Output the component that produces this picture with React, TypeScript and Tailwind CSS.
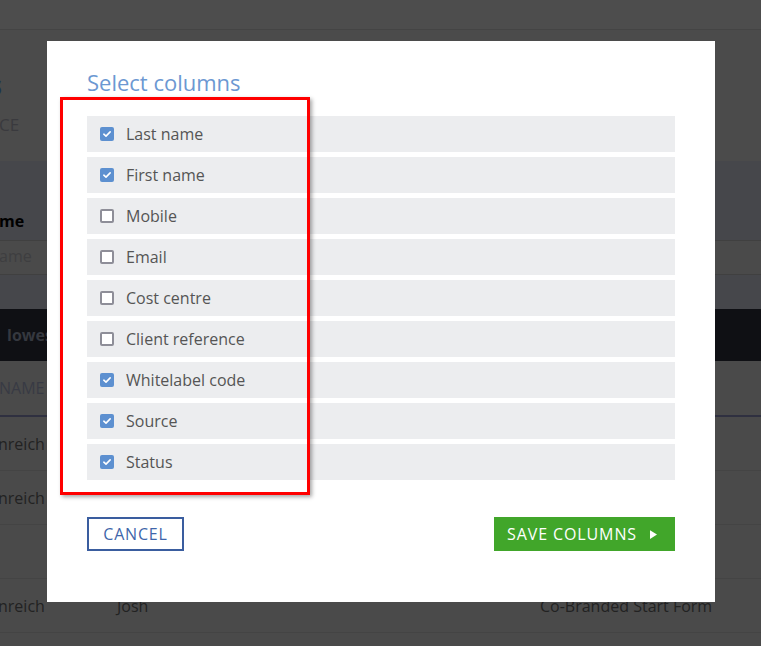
import { useState } from 'react';

const columns = [
  { label: 'Last name', checked: true },
  { label: 'First name', checked: true },
  { label: 'Mobile', checked: false },
  { label: 'Email', checked: false },
  { label: 'Cost centre', checked: false },
  { label: 'Client reference', checked: false },
  { label: 'Whitelabel code', checked: true },
  { label: 'Source', checked: true },
  { label: 'Status', checked: true },
];

function Checkbox({ checked }: { checked: boolean }) {
  if (checked) {
    return (
      <span className="flex h-[14px] w-[14px] items-center justify-center rounded-[2px] bg-[#5d90d0]">
        <svg viewBox="0 0 12 12" className="h-[10px] w-[10px]">
          <path d="M2.2 6.2 L4.8 8.6 L9.8 3.4" fill="none" stroke="#fff" strokeWidth="1.9" strokeLinecap="round" strokeLinejoin="round" />
        </svg>
      </span>
    );
  }
  return <span className="h-[14px] w-[14px] rounded-[2px] border-2 border-[#8e8e98] bg-white" />;
}

export default function App() {
  const [cols, setCols] = useState(columns);

  const toggle = (i: number) =>
    setCols((prev) => prev.map((c, j) => (j === i ? { ...c, checked: !c.checked } : c)));

  return (
    <div className="relative h-[646px] w-[761px] overflow-hidden bg-[#4a4a4a] font-['Open_Sans',sans-serif]">
      {/* Page behind the overlay */}
      <div className="h-[30px] border-b border-[#444] bg-[#4d4d4d]" />
      <div className="h-[131px] bg-[#4b4b4b] pt-[42px]">
        <div className="-ml-[11px] text-[26px] font-bold leading-none text-[#1d3450]">s</div>
        <div className="-ml-[1px] mt-[18px] text-[17px] leading-none text-[#3a3a3e]">CE</div>
      </div>
      <div className="bg-[#46474b]">
        <div className="h-[79px] pt-[52px]">
          <div className="-ml-[1px] text-[16px] font-bold leading-none text-black">me</div>
        </div>
        <div className="h-[35px] border-y border-[#404040] bg-[#4a4a4a] pt-[7px]">
          <div className="-ml-[1px] text-[16px] leading-none text-[#3e3e40]">ame</div>
        </div>
        <div className="h-[34px]" />
      </div>
      <div className="flex h-[52px] items-center bg-[#0f1014]">
        <span className="pl-[7px] text-[16px] font-bold text-[#35383f]">lowest</span>
      </div>
      <div className="flex h-[56px] items-center border-b-2 border-[#2f3040]">
        <span className="-ml-[1px] text-[16px] text-[#383a44]">NAME</span>
      </div>
      {['nreich', 'nreich', '', 'nreich'].map((t, i) => (
        <div key={i} className="flex h-[54px] items-center border-b border-[#444] text-[16px] text-[#222]">
          <span className="-ml-[2px] w-[119px]">{t}</span>
          {i === 3 && (
            <>
              <span className="w-[423px]">Josh</span>
              <span>Co-Branded Start Form</span>
            </>
          )}
        </div>
      ))}

      {/* Modal */}
      <div className="absolute left-[47px] top-[41px] h-[561px] w-[668px] bg-white px-[40px] pt-[26px]">
        <h2 className="text-[22px] font-normal leading-[30px] text-[#6c98d2]">Select columns</h2>
        <div className="mt-[19px] flex flex-col gap-[5px]">
          {cols.map((c, i) => (
            <label
              key={c.label}
              onClick={() => toggle(i)}
              className="flex h-[36px] cursor-pointer items-center gap-[12px] bg-[#ecedef] pl-[13px] text-[16px] text-[#555]"
            >
              <Checkbox checked={c.checked} />
              <span>{c.label}</span>
            </label>
          ))}
        </div>
        <div className="mt-[37px] flex items-center justify-between">
          <button className="h-[34px] w-[97px] border-2 border-[#3a5d9f] text-[16px] tracking-[0.8px] text-[#3f66aa]">
            CANCEL
          </button>
          <button className="flex h-[34px] w-[181px] items-center gap-[13px] bg-[#41a62a] pl-[13px] text-[16px] tracking-[0.9px] text-white">
            SAVE COLUMNS
            <svg viewBox="0 0 8 10" className="h-[9px] w-[7px]">
              <path d="M0 0 L8 5 L0 10 Z" fill="#fff" />
            </svg>
          </button>
        </div>
      </div>

      {/* Highlight annotation */}
      <div className="pointer-events-none absolute left-[60px] top-[97px] h-[398px] w-[250px] border-[3px] border-[#ff0000] shadow-[2px_2px_4px_rgba(0,0,0,0.35)]" />
    </div>
  );
}
